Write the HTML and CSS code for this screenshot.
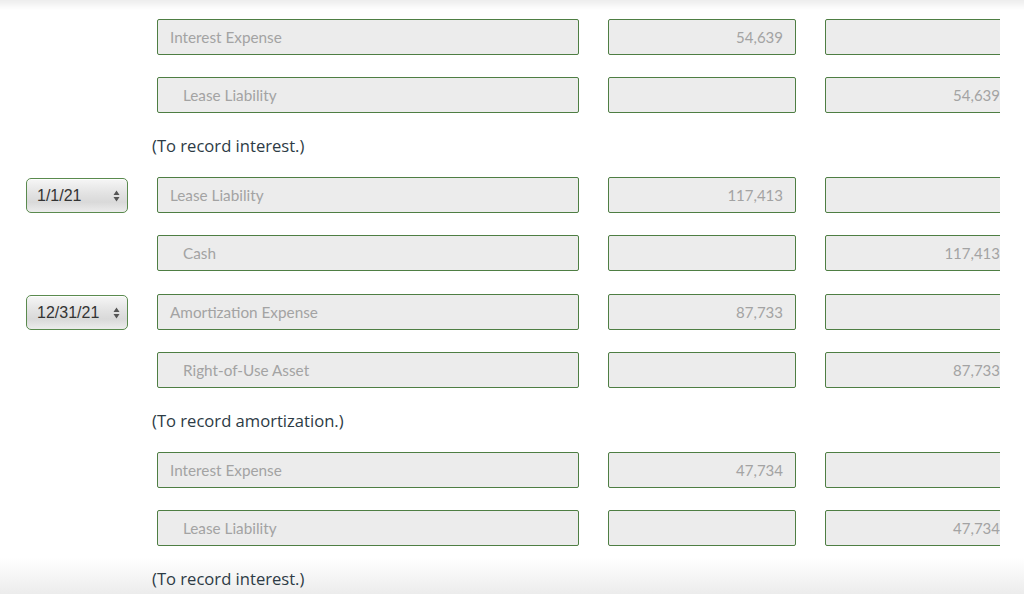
FILE: index.html
```html
<!DOCTYPE html>
<html>
<head>
<meta charset="utf-8">
<link rel="stylesheet" href="styles.css">
</head>
<body>
<div class="clip">
  <div class="journal">
    <div class="row">
      <div class="date"></div>
      <div class="field acct">Interest Expense</div>
      <div class="field num">54,639</div>
      <div class="field num"></div>
    </div>
    <div class="row">
      <div class="date"></div>
      <div class="field acct cr">Lease Liability</div>
      <div class="field num"></div>
      <div class="field num">54,639</div>
    </div>
    <div class="note">(To record interest.)</div>

    <div class="row">
      <div class="date"><div class="select"><span>1/1/21</span><svg width="7" height="12" viewBox="0 0 7 12"><path d="M3.5 0.5 L6.5 5 H0.5 Z M3.5 11.5 L6.5 7 H0.5 Z" fill="#555"/></svg></div></div>
      <div class="field acct">Lease Liability</div>
      <div class="field num">117,413</div>
      <div class="field num"></div>
    </div>
    <div class="row row-gap-wide">
      <div class="date"></div>
      <div class="field acct cr">Cash</div>
      <div class="field num"></div>
      <div class="field num">117,413</div>
    </div>

    <div class="row">
      <div class="date"><div class="select"><span>12/31/21</span><svg width="7" height="12" viewBox="0 0 7 12"><path d="M3.5 0.5 L6.5 5 H0.5 Z M3.5 11.5 L6.5 7 H0.5 Z" fill="#555"/></svg></div></div>
      <div class="field acct">Amortization Expense</div>
      <div class="field num">87,733</div>
      <div class="field num"></div>
    </div>
    <div class="row">
      <div class="date"></div>
      <div class="field acct cr">Right-of-Use Asset</div>
      <div class="field num"></div>
      <div class="field num">87,733</div>
    </div>
    <div class="note">(To record amortization.)</div>

    <div class="row">
      <div class="date"></div>
      <div class="field acct">Interest Expense</div>
      <div class="field num">47,734</div>
      <div class="field num"></div>
    </div>
    <div class="row">
      <div class="date"></div>
      <div class="field acct cr">Lease Liability</div>
      <div class="field num"></div>
      <div class="field num">47,734</div>
    </div>
    <div class="note">(To record interest.)</div>
  </div>
</div>
<div class="shade-top"></div>
</body>
</html>
```
FILE: styles.css
```css
html, body {
  margin: 0;
  padding: 0;
  height: 594px;
  overflow: hidden;
}

body {
  background: linear-gradient(to bottom, #ffffff 0px, #ffffff 558px, #ececec 594px);
}

.clip {
  width: 1000px;
  overflow: hidden;
}

.journal {
  padding: 19px 0 0 26px;
  width: 1100px;
}

.row {
  display: flex;
  align-items: center;
  gap: 29px;
  height: 36px;
  margin-bottom: 22px;
}

.row-gap-wide {
  margin-bottom: 23px;
}

.date {
  width: 102px;
  flex: none;
  display: flex;
  align-items: center;
}

.field {
  box-sizing: border-box;
  height: 36px;
  flex: none;
  background: #ececec;
  border: 1px solid #4e7e43;
  border-radius: 2px;
  font-family: Lato, "Liberation Sans", sans-serif;
  font-size: 15px;
  color: #a3a3a3;
  line-height: 34px;
  padding: 0 12px;
  white-space: nowrap;
}

.acct {
  width: 422px;
  font-size: 15.3px;
}

.acct.cr {
  padding-left: 25px;
}

.num {
  width: 188px;
  text-align: right;
}

.select {
  box-sizing: border-box;
  width: 102px;
  height: 35px;
  margin-top: 1px;
  border: 1px solid #5a8a4e;
  border-radius: 5px;
  background: linear-gradient(#f6f6f6 0%, #e2e2e2 45%, #d9d9d9 70%, #ececec 100%);
  box-shadow: inset 0 1px 0 rgba(255,255,255,0.8);
  display: flex;
  align-items: center;
  justify-content: space-between;
  padding: 0 7px 0 10px;
  font-family: "Liberation Sans", Arial, sans-serif;
  font-size: 16px;
  color: #333;
}

.select svg {
  display: block;
}

.note {
  height: 20px;
  line-height: 22px;
  margin: 0 0 22px 126px;
  font-family: "Open Sans", "DejaVu Sans", sans-serif;
  font-size: 16.6px;
  color: #2d3b45;
  white-space: nowrap;
}

.shade-top {
  position: fixed;
  left: 0;
  top: 0;
  width: 1024px;
  height: 10px;
  background: linear-gradient(rgba(0,0,0,0.07), rgba(0,0,0,0));
  pointer-events: none;
}
```
